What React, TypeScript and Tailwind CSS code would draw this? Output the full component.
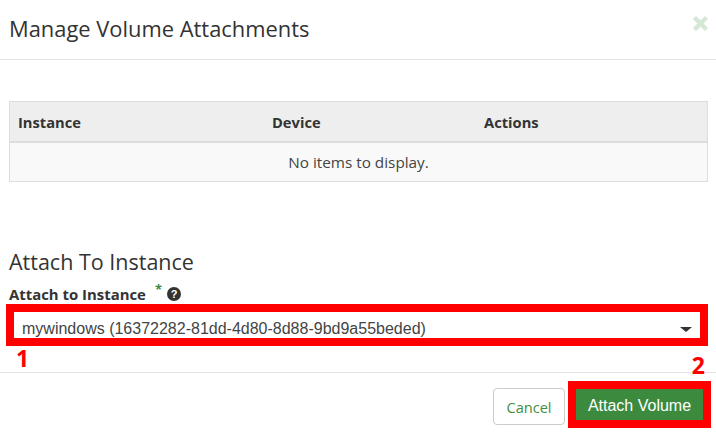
import React from "react";

const sans = "font-['Open_Sans','Liberation_Sans',sans-serif]";
const arial = "font-['Liberation_Sans',Arial,sans-serif]";

const App = () => {
  return (
    <div className={`w-[716px] h-[434px] bg-white overflow-hidden text-[#333] ${sans}`}>
      <div className="h-[60px] border-b border-[#e5e5e5] flex justify-between pl-[9px] pr-[7px]">
        <h4 className="text-[21.9px] leading-[28px] pt-[15px] text-[#333]">Manage Volume Attachments</h4>
        <svg width="17" height="17" viewBox="0 0 17 17" className="mt-[15px]">
          <path d="M2.5 2.5L14.5 14.5M14.5 2.5L2.5 14.5" stroke="#d5e8d6" strokeWidth="4.5" />
        </svg>
      </div>

      <div className="mt-[41px] mx-[9px] w-[699px] h-[81px] border border-[#ddd] bg-[#f9f9f9]">
        <div className="h-[41px] flex items-center bg-[#eee] border-b-2 border-[#ddd] text-[14.7px] font-bold pt-[2px]">
          <div className="w-[254px] pl-[8px]">Instance</div>
          <div className="w-[212px] pl-[8px]">Device</div>
          <div className="pl-[8px]">Actions</div>
        </div>
        <div className="h-[38px] flex items-center justify-center text-[15.3px] text-[#444]">No items to display.</div>
      </div>

      <div className="mt-[66px] pl-[9px] text-[21.5px] leading-[28px]">Attach To Instance</div>
      <div className="pl-[9px] mt-[8px] h-[20px] flex items-center text-[14.9px] font-bold">
        <span>Attach to Instance</span>
        <span className="ml-[9px] mt-[-10px] text-[#3c8a3e] text-[13px] leading-none">*</span>
        <svg width="14" height="14" viewBox="0 0 14 14" className="ml-[5px]">
          <circle cx="7" cy="7" r="7" fill="#333" />
          <text x="7" y="11" textAnchor="middle" fontSize="11" fontWeight="700" fill="#fff" fontFamily="Liberation Sans, sans-serif">?</text>
        </svg>
      </div>

      <div className="relative ml-[6px] w-[702px] h-[42px] border-[8px] border-[#ff0000] bg-white flex items-center justify-between pl-[8px] pr-[8px] pt-[8px]">
        <span className={`${arial} text-[16px] text-[#444]`}>mywindows (16372282-81dd-4d80-8d88-9bd9a55beded)</span>
        <span className="w-0 h-0 border-x-[6px] border-x-transparent border-t-[5px] border-t-[#333]" />
        <span className="absolute left-[2px] top-[32px] text-[23px] leading-[28px] font-bold text-[#ff0000]">1</span>
      </div>

      <div className="relative mt-[26px] border-t border-[#e5e5e5] h-[62px] flex justify-end items-start pr-[5px]">
        <span className="absolute right-[11px] top-[-22px] text-[23px] leading-[28px] font-bold text-[#ff0000]">2</span>
        <button className="mt-[15px] mr-[3px] w-[72px] h-[37px] border border-[#ccc] rounded-[4px] bg-white text-[#3f8f41] text-[14.6px] pt-[2px]">Cancel</button>
        <div className="mt-[8px] border-[8px] border-[#ff0000] w-[143px] h-[47px]">
          <button className={`w-full h-full bg-[#3c8a3e] text-white text-[16px] pt-[3px] ${arial}`}>Attach Volume</button>
        </div>
      </div>
    </div>
  );
};

export default App;
